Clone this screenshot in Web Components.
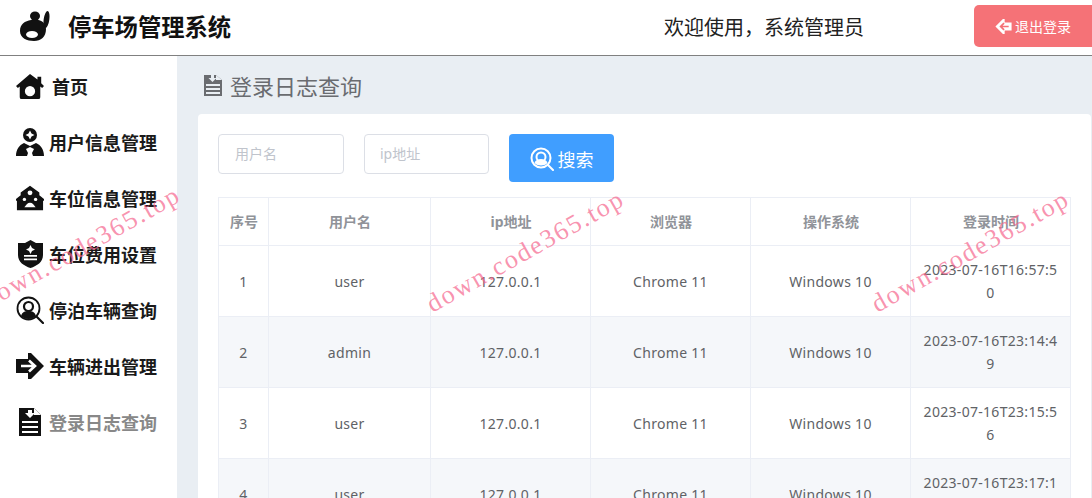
<!DOCTYPE html>
<html lang="zh">
<head>
<meta charset="utf-8">
<title>停车场管理系统</title>
<style>
  html, body { margin: 0; height: 100%; overflow: hidden; }
  body { font-family: "Noto Sans", "Noto Sans CJK SC", sans-serif; }
</style>
</head>
<body>
<parking-app></parking-app>

<script>
const ICONS = {
  logo: '<svg viewBox="0 0 32 32" width="32" height="32"><path fill="#111" d="M11 9c8-2 15 2 15 9 0 8-5 12-12 12S0 27 0 20 5 10 11 9z"/><ellipse cx="12" cy="23.500" rx="6" ry="3.500" fill="#fff"/><ellipse cx="15" cy="5" rx="5" ry="4.500" fill="#111"/><ellipse cx="26.500" cy="8.500" rx="2.800" ry="8.500" fill="#111" transform="rotate(8 26.500 8.500)"/></svg>',
  home: '<svg viewBox="0 0 30 27" width="30" height="27"><path fill="#111" fill-rule="evenodd" d="M15 0 23 6V3h4v7l3 3-2 2-2-1.500V25a2 2 0 0 1-2 2H6a2 2 0 0 1-2-2V13.500L2 15l-2-2zm0 13a5.500 5.500 0 1 0 0 11 5.500 5.500 0 0 0 0-11z"/></svg>',
  user: '<svg viewBox="0 0 28 28" width="28" height="28"><circle cx="14" cy="7" r="7" fill="#111"/><path fill="#fff" d="M14 2.500 15.500 5.500 18.500 7 15.500 8.500 14 11.500 12.500 8.500 9.500 7 12.500 5.500z"/><path fill="#111" d="M8 15c-5 2-8 7-8 13h11l1-3-2-4 4-2 4 2-2 4 1 3h11c0-6-3-11-8-13l-6 3z"/></svg>',
  place: '<svg viewBox="0 0 30 26" width="30" height="26"><path fill="#111" d="M15 0 25 7v3l5 4v2h-1v10H1V16H0v-2l5-4V7z"/><circle cx="15" cy="7.500" r="2.600" fill="#fff"/><circle cx="9" cy="14.500" r="1.800" fill="#fff"/><circle cx="21" cy="14.500" r="1.800" fill="#fff"/><path fill="#fff" d="M9 23c2-3 3.500-5 6-5s4 2 6 5z"/></svg>',
  shield: '<svg viewBox="0 0 25 28" width="25" height="28"><path fill="#111" d="M12.500 0 18 3h7v12c0 7-6 11-12.500 13C6 26 0 22 0 15V3h7z"/><path fill="#fff" d="M12.500 5l1.500 3 3 1.500-3 1.500-1.500 3-1.500-3-3-1.500 3-1.500zM6 15h13v1.800H6zM6 18.500h13v1.800H6z"/></svg>',
  search: '<svg viewBox="0 0 28 28" width="28" height="28"><circle cx="12.500" cy="12.500" r="11" fill="none" stroke="#111" stroke-width="1.800"/><circle cx="12.500" cy="10.500" r="4.500" fill="none" stroke="#111" stroke-width="2.200"/><path fill="#111" d="M5 20c1-4 4-5 7.500-5s6.500 1 7.500 5c-2 2-4.500 3-7.500 3S7 22 5 20z"/><path stroke="#111" stroke-width="2.200" stroke-linecap="round" d="m21 21 6 6"/></svg>',
  out: '<svg viewBox="0 0 28 26" width="28" height="26"><path fill="#111" d="M0 6h12V0h3l13 13-13 13h-3v-6H0z"/><path fill="none" stroke="#fff" stroke-width="2.600" d="M5 13h13M13 7.500l6 5.500-6 5.500"/></svg>',
  doc: '<svg viewBox="0 0 22 28" width="22" height="28"><path fill="#111" d="M0 0h15l7 7v21H0z"/><path fill="#fff" d="M15 0l7 7h-7zM9 2h4v3h3l-5 5-5-5h3zM3 13h16v2H3zM3 18h16v2H3zM3 23h16v2H3z"/></svg>',
  title: '<svg viewBox="0 0 18 21" width="18" height="21"><path fill="currentColor" d="M0 0h12l6 5v16H0z"/><path fill="#e9eef3" d="M12 0l6 5h-6zM7 0h3v3h2.500L8.500 7 4.500 3H7zM2 9h14v2H2zM2 13h14v2H2zM2 17h14v2H2z"/></svg>',
  back: '<svg viewBox="0 0 28 26" width="17" height="15"><path fill="#fff" d="M28 6H16V0h-3L0 13l13 13h3v-6h12z"/><path fill="none" stroke="#f57277" stroke-width="3" d="M23 13H9M15 7l-6 6 6 6"/></svg>',
  lens: '<svg viewBox="0 0 24 24" width="24" height="24"><circle cx="11" cy="11" r="9.500" fill="none" stroke="#fff" stroke-width="2"/><circle cx="11" cy="10" r="4.500" fill="none" stroke="#fff" stroke-width="2"/><path fill="#fff" d="M4.500 16c1-3 3.500-4 6.500-4s5.500 1 6.500 4c-2 1.800-4 2.500-6.500 2.500S6.500 17.800 4.500 16z"/><path stroke="#fff" stroke-width="2" stroke-linecap="round" d="m18 18 5 5"/></svg>'
};

class AppHeader extends HTMLElement {
  constructor() {
    super();
    this.attachShadow({ mode: 'open' }).innerHTML = `
      <style>
        :host { display: flex; align-items: center; height: 55px; border-bottom: 1px solid #808080; background: #fff; color: #111; }
        .logo { display: flex; margin: 0 0 1px 20px; width: 32px; }
        h1 { margin: 0 0 3px 16px; font-size: 23.300px; font-weight: 700; white-space: nowrap; }
        .welcome { margin: 0 0 2px auto; font-size: 20px; color: #222; }
        button { display: flex; align-items: center; justify-content: center; gap: 3px; width: 118px; height: 42px; margin-left: 110px; margin-bottom: 3px; padding: 0; border: 0; border-radius: 5px 0 0 5px; background: #f57277; color: #fff; font: inherit; font-size: 14px; }
      </style>
      <span class="logo">${ICONS.logo}</span>
      <h1>停车场管理系统</h1>
      <span class="welcome">欢迎使用，系统管理员</span>
      <button>${ICONS.back}退出登录</button>`;
  }
}

class NavItem extends HTMLElement {
  constructor() {
    super();
    this.attachShadow({ mode: 'open' }).innerHTML = `
      <style>
        :host { display: flex; align-items: center; height: 56px; padding-left: 16px; font-size: 18px; font-weight: 700; color: #1a1a1a; white-space: nowrap; }
        :host([active]) { color: #888; }
        .icon { display: flex; justify-content: center; width: 28px; margin-right: 5px; }
        :host([pad]) .icon { margin-right: 8px; }
        .label { margin-bottom: 1px; }
      </style>
      <span class="icon"></span><span class="label"><slot></slot></span>`;
  }

  connectedCallback() {
    this.shadowRoot.querySelector('.icon').innerHTML = ICONS[this.getAttribute('icon')];
  }
}

class SideNav extends HTMLElement {
  constructor() {
    super();
    this.attachShadow({ mode: 'open' }).innerHTML = `
      <style>
        :host { display: block; flex: none; width: 177px; padding-top: 2px; background: #fff; box-sizing: border-box; }
      </style>
      <slot></slot>`;
  }
}

class SearchBar extends HTMLElement {
  constructor() {
    super();
    this.attachShadow({ mode: 'open' }).innerHTML = `
      <style>
        :host { display: flex; align-items: flex-start; }
        input { box-sizing: border-box; width: 126px; height: 40px; margin-right: 20px; padding: 0 15px 2px 16px; border: 1px solid #dcdfe6; border-radius: 4px; font: inherit; font-size: 14px; outline: 0; }
        input + input { width: 125px; padding-left: 15px; }
        input::placeholder { color: #c0c4cc; opacity: 1; }
        button { display: flex; align-items: center; justify-content: center; gap: 4px; width: 105px; height: 48px; padding: 1px 0 0; border: 0; border-radius: 4px; background: #409eff; color: #fff; font: inherit; font-size: 18px; }
      </style>
      <input placeholder="用户名">
      <input placeholder="ip地址">
      <button>${ICONS.lens}搜索</button>`;
  }
}

class LogTable extends HTMLElement {
  set rows(list) {
    const body = list.map((r, i) => `<tr>
      <td>${i + 1}</td><td>${r[0]}</td><td>127.0.0.1</td><td>Chrome 11</td><td>Windows 10</td><td class="time">${r[1]}</td>
    </tr>`).join('');
    this.shadowRoot.querySelector('tbody').innerHTML = body;
  }

  constructor() {
    super();
    this.attachShadow({ mode: 'open' }).innerHTML = `
      <style>
        :host { display: block; margin-top: 15px; font-size: 14px; color: #606266; }
        table { width: 852px; table-layout: fixed; border-collapse: collapse; border: 1px solid #ebeef5; }
        th, td { padding: 12px 10px; border: 1px solid #ebeef5; line-height: 23px; text-align: center; letter-spacing: .3px; word-break: break-all; }
        th { color: #909399; font-weight: 700; padding-left: 1px; padding-right: 0; letter-spacing: 0; }
        tbody tr:nth-child(even) td { background: #f5f7fa; }
      </style>
      <table>
        <colgroup><col style="width:50px"><col style="width:162px"><col style="width:160px"><col style="width:160px"><col style="width:160px"><col style="width:160px"></colgroup>
        <thead><tr><th>序号</th><th>用户名</th><th>ip地址</th><th>浏览器</th><th>操作系统</th><th>登录时间</th></tr></thead>
        <tbody></tbody>
      </table>`;
  }
}

class LogPage extends HTMLElement {
  constructor() {
    super();
    this.attachShadow({ mode: 'open' }).innerHTML = `
      <style>
        :host { display: block; flex: 1; min-width: 0; padding: 13px 1px 0 21px; background: #e9eef3; overflow: hidden; }
        h2 { display: flex; align-items: center; gap: 8px; height: 32px; margin: 0 0 13px 6px; font-size: 22px; font-weight: 400; color: #6a6c70; }
        .card { height: 400px; padding: 20px; border-radius: 4px 4px 0 0; background: #fff; }
      </style>
      <h2>${ICONS.title}登录日志查询</h2>
      <div class="card">
        <search-bar></search-bar>
        <log-table></log-table>
      </div>`;
    customElements.whenDefined('log-table').then(() => {
      this.shadowRoot.querySelector('log-table').rows = [
        ['user', '2023-07-16T16:57:50'],
        ['admin', '2023-07-16T23:14:49'],
        ['user', '2023-07-16T23:15:56'],
        ['user', '2023-07-16T23:17:10']
      ];
    });
  }
}

class WaterMark extends HTMLElement {
  constructor() {
    super();
    this.attachShadow({ mode: 'open' }).innerHTML = `
      <style>
        :host { position: absolute; transform: rotate(-29.300deg); transform-origin: 0 100%; font-family: "Liberation Serif", serif; font-size: 26px; letter-spacing: 1.900px; color: rgba(245, 100, 140, .7); white-space: nowrap; pointer-events: none; }
      </style>
      <slot></slot>`;
  }
}

class ParkingApp extends HTMLElement {
  constructor() {
    super();
    this.attachShadow({ mode: 'open' }).innerHTML = `
      <style>
        :host { display: block; position: relative; width: 1092px; height: 498px; overflow: hidden; }
        .body { display: flex; height: 442px; }
      </style>
      <app-header></app-header>
      <div class="body">
        <side-nav>
          <nav-item icon="home" pad>首页</nav-item>
          <nav-item icon="user">用户信息管理</nav-item>
          <nav-item icon="place">车位信息管理</nav-item>
          <nav-item icon="shield">车位费用设置</nav-item>
          <nav-item icon="search">停泊车辆查询</nav-item>
          <nav-item icon="out">车辆进出管理</nav-item>
          <nav-item icon="doc" active>登录日志查询</nav-item>
        </side-nav>
        <log-page></log-page>
      </div>
      <water-mark style="left:-8px;top:285px">down.code365.top</water-mark>
      <water-mark style="left:436px;top:289px">down.code365.top</water-mark>
      <water-mark style="left:881px;top:289px">down.code365.top</water-mark>`;
  }
}

customElements.define('app-header', AppHeader);
customElements.define('nav-item', NavItem);
customElements.define('side-nav', SideNav);
customElements.define('search-bar', SearchBar);
customElements.define('log-table', LogTable);
customElements.define('log-page', LogPage);
customElements.define('water-mark', WaterMark);
customElements.define('parking-app', ParkingApp);
</script>
</body>
</html>
